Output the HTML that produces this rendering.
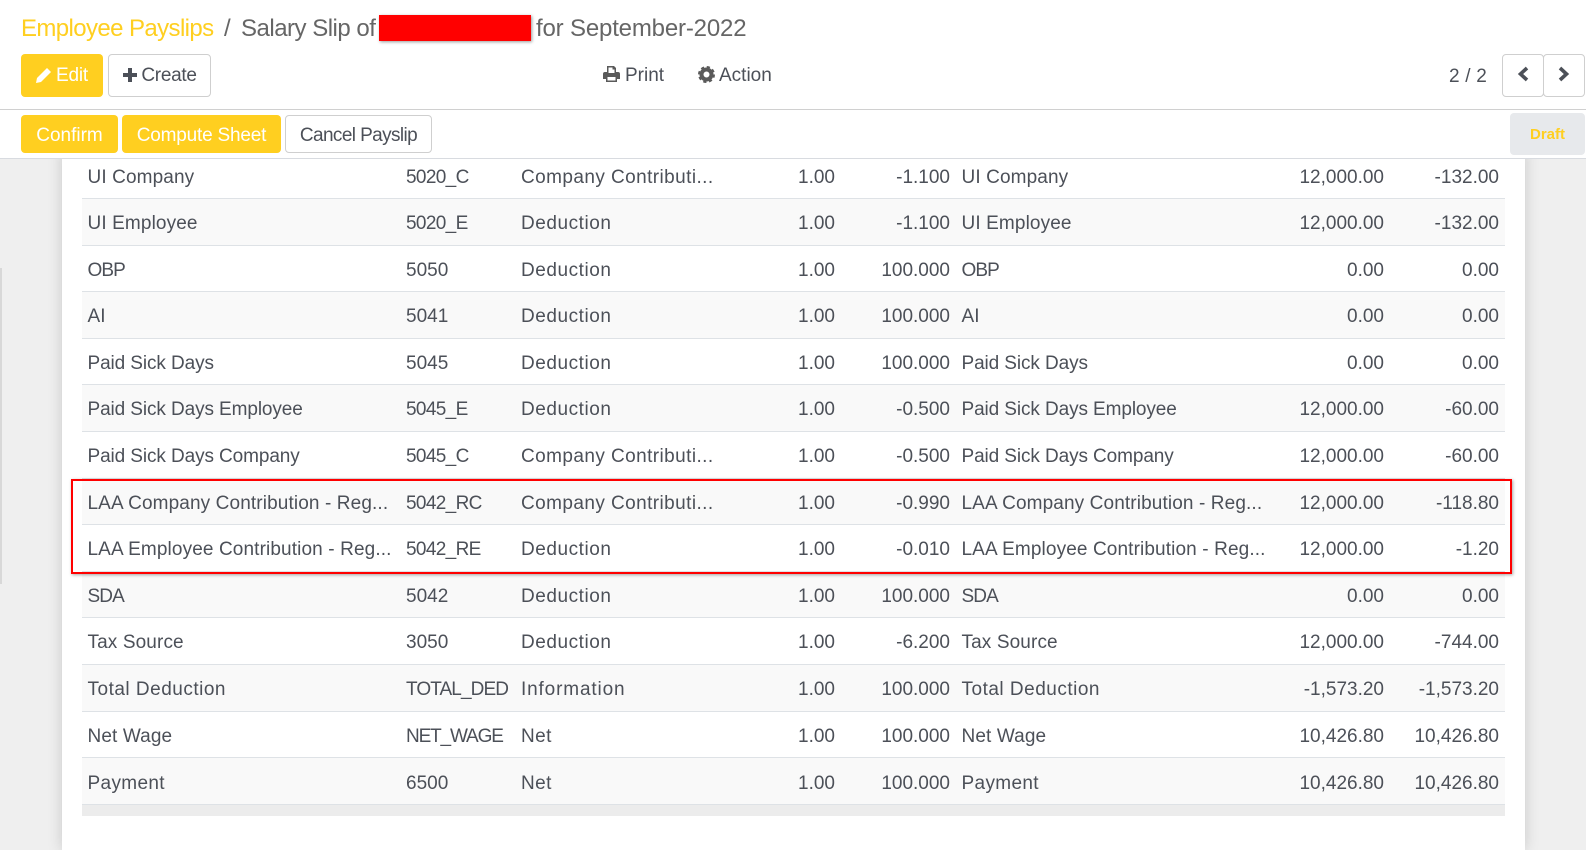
<!DOCTYPE html>
<html><head><meta charset="utf-8">
<style>
html,body{margin:0;padding:0}
body{width:1586px;height:847px;overflow:hidden;position:relative;background:#efefef;font-family:"Liberation Sans",sans-serif;font-size:19px;color:#4c5058}
div,span,svg{position:absolute;box-sizing:border-box}
.t{white-space:nowrap;line-height:24px}
.btn{border-radius:4px;line-height:36px;white-space:nowrap;text-align:center}
.y{background:#ffcf20;color:#fff}
.w{background:#fff;border:1px solid #cfcfcf;color:#4c5058}
.row{left:82px;width:1423px;height:46.6px;border-top:1px solid #dee2e6}
.s{background:#f9f9f9}
.row span{top:12px;line-height:26px;white-space:nowrap}
.row.first span{top:13px}
.row.last span{top:13px}
.a{left:5.500px;letter-spacing:.12px}.b{left:324px}.c{left:439px;letter-spacing:.42px}
.b.u{letter-spacing:-.65px}
.d{right:670px}.e{right:555px}
.f{left:879.500px;letter-spacing:.12px}
.g{right:121px}.h{right:6px}
.a.p,.f.p{letter-spacing:-.1px}
.a.q,.f.q{letter-spacing:-.9px}
.c.x{letter-spacing:.55px}
</style></head><body>
<div style="left:0;top:268px;width:2px;height:316px;background:#d8d8d8"></div>
<div style="left:62px;top:150px;width:1463px;height:700px;background:#fff;box-shadow:0 0 14px rgba(0,0,0,.16)"></div>

<div style="left:82px;top:804px;width:1423px;height:12px;background:#ececec;border-top:1px solid #dee2e6"></div>

<div class="row first" style="top:152px;height:46px;border-top:0"><span class="a">UI Company</span><span class="b u">5020_C</span><span class="c">Company Contributi...</span><span class="d">1.00</span><span class="e">-1.100</span><span class="f">UI Company</span><span class="g">12,000.00</span><span class="h">-132.00</span></div>
<div class="row s" style="top:198px"><span class="a">UI Employee</span><span class="b u">5020_E</span><span class="c x">Deduction</span><span class="d">1.00</span><span class="e">-1.100</span><span class="f">UI Employee</span><span class="g">12,000.00</span><span class="h">-132.00</span></div>
<div class="row" style="top:244.6px"><span class="a q">OBP</span><span class="b">5050</span><span class="c x">Deduction</span><span class="d">1.00</span><span class="e">100.000</span><span class="f q">OBP</span><span class="g">0.00</span><span class="h">0.00</span></div>
<div class="row s" style="top:291.2px"><span class="a">AI</span><span class="b">5041</span><span class="c x">Deduction</span><span class="d">1.00</span><span class="e">100.000</span><span class="f">AI</span><span class="g">0.00</span><span class="h">0.00</span></div>
<div class="row" style="top:337.8px"><span class="a p">Paid Sick Days</span><span class="b">5045</span><span class="c x">Deduction</span><span class="d">1.00</span><span class="e">100.000</span><span class="f p">Paid Sick Days</span><span class="g">0.00</span><span class="h">0.00</span></div>
<div class="row s" style="top:384.4px"><span class="a p">Paid Sick Days Employee</span><span class="b u">5045_E</span><span class="c x">Deduction</span><span class="d">1.00</span><span class="e">-0.500</span><span class="f p">Paid Sick Days Employee</span><span class="g">12,000.00</span><span class="h">-60.00</span></div>
<div class="row" style="top:431px"><span class="a p">Paid Sick Days Company</span><span class="b u">5045_C</span><span class="c">Company Contributi...</span><span class="d">1.00</span><span class="e">-0.500</span><span class="f p">Paid Sick Days Company</span><span class="g">12,000.00</span><span class="h">-60.00</span></div>
<div class="row s" style="top:477.6px"><span class="a">LAA Company Contribution - Reg...</span><span class="b u">5042_RC</span><span class="c">Company Contributi...</span><span class="d">1.00</span><span class="e">-0.990</span><span class="f">LAA Company Contribution - Reg...</span><span class="g">12,000.00</span><span class="h">-118.80</span></div>
<div class="row" style="top:524.2px"><span class="a">LAA Employee Contribution - Reg...</span><span class="b u">5042_RE</span><span class="c x">Deduction</span><span class="d">1.00</span><span class="e">-0.010</span><span class="f">LAA Employee Contribution - Reg...</span><span class="g">12,000.00</span><span class="h">-1.20</span></div>
<div class="row s" style="top:570.8px"><span class="a q">SDA</span><span class="b">5042</span><span class="c x">Deduction</span><span class="d">1.00</span><span class="e">100.000</span><span class="f q">SDA</span><span class="g">0.00</span><span class="h">0.00</span></div>
<div class="row" style="top:617.4px"><span class="a">Tax Source</span><span class="b">3050</span><span class="c x">Deduction</span><span class="d">1.00</span><span class="e">-6.200</span><span class="f">Tax Source</span><span class="g">12,000.00</span><span class="h">-744.00</span></div>
<div class="row s" style="top:664px"><span class="a" style="letter-spacing:.5px">Total Deduction</span><span class="b u" style="letter-spacing:-.9px">TOTAL_DED</span><span class="c" style="letter-spacing:.85px">Information</span><span class="d">1.00</span><span class="e">100.000</span><span class="f" style="letter-spacing:.5px">Total Deduction</span><span class="g">-1,573.20</span><span class="h">-1,573.20</span></div>
<div class="row" style="top:710.6px"><span class="a">Net Wage</span><span class="b u" style="letter-spacing:-1.15px">NET_WAGE</span><span class="c">Net</span><span class="d">1.00</span><span class="e">100.000</span><span class="f">Net Wage</span><span class="g">10,426.80</span><span class="h">10,426.80</span></div>
<div class="row s last" style="top:757.2px"><span class="a" style="letter-spacing:.35px">Payment</span><span class="b">6500</span><span class="c">Net</span><span class="d">1.00</span><span class="e">100.000</span><span class="f" style="letter-spacing:.35px">Payment</span><span class="g">10,426.80</span><span class="h">10,426.80</span></div>

<div style="left:71px;top:479px;width:1441px;height:95px;border:2px solid #f00;box-shadow:1px 1px 3px rgba(0,0,0,.35)"></div>

<div style="left:0;top:0;width:1586px;height:159px;background:#fff;border-bottom:1px solid #d8dbe0"></div>
<div style="left:0;top:109px;width:1586px;height:1px;background:#d0d0d0"></div>

<div class="t" style="left:21px;top:15px;font-size:24px;line-height:27px;color:#ffcf20;letter-spacing:-.6px">Employee Payslips</div>
<div class="t" style="left:224px;top:15px;font-size:24px;line-height:27px;color:#666">/</div>
<div class="t" style="left:241px;top:15px;font-size:24px;line-height:27px;color:#666;letter-spacing:-.5px">Salary Slip of</div>
<div style="left:379px;top:15px;width:152px;height:26px;background:#f00;box-shadow:1px 1px 3px rgba(0,0,0,.4)"></div>
<div class="t" style="left:536px;top:15px;font-size:24px;line-height:27px;color:#666;letter-spacing:-.17px">for September-2022</div>

<div class="btn y" style="left:21px;top:54px;width:82px;height:43px;line-height:43px;padding-left:20px;letter-spacing:-.2px">Edit</div>
<svg style="left:35px;top:67px" width="17" height="17" viewBox="0 0 17 17"><path fill="#fff" d="M12 1l4 4-10 10-5 1 1-5z"/></svg>
<div class="btn w" style="left:108px;top:54px;width:103px;height:43px;line-height:41px;padding-left:19px;letter-spacing:-.3px">Create</div>
<svg style="left:123px;top:68px" width="14" height="14" viewBox="0 0 14 14"><path fill="#4c5058" d="M5 0h4v5h5v4H9v5H5V9H0V5h5z"/></svg>

<svg style="left:603px;top:66px" width="17" height="16" viewBox="0 0 17 16"><path fill="#5a5a5a" d="M4 0h7l2 2v4h2a2 2 0 0 1 2 2v5h-3v3H3v-3H0V8a2 2 0 0 1 2-2h2zM5.500 1.500V7h6V3.500h-2v-2zM4.500 11v3.500h8V11z" fill-rule="evenodd"/></svg>
<div class="t" style="left:625px;top:64px">Print</div>
<svg style="left:698px;top:66px" width="17" height="17" viewBox="0 0 17 17"><circle cx="8.500" cy="8.500" r="5" fill="none" stroke="#5a5a5a" stroke-width="4"/><circle cx="8.500" cy="8.500" r="7" fill="none" stroke="#5a5a5a" stroke-width="3" stroke-dasharray="3 2.500"/></svg>
<div class="t" style="left:719px;top:64px">Action</div>

<div class="t" style="left:1449px;top:65px;letter-spacing:.2px">2 / 2</div>
<div class="w" style="left:1502px;top:54px;width:42px;height:43px;border-radius:4px"></div>
<div class="w" style="left:1543px;top:54px;width:42px;height:43px;border-radius:4px"></div>
<svg style="left:1517px;top:66px" width="12" height="16" viewBox="0 0 12 16"><path fill="none" stroke="#4c5058" stroke-width="3.600" d="M10 2L3.500 8l6.500 6"/></svg>
<svg style="left:1558px;top:66px" width="12" height="16" viewBox="0 0 12 16"><path fill="none" stroke="#4c5058" stroke-width="3.600" d="M2 2l6.500 6L2 14"/></svg>

<div class="btn y" style="left:21px;top:115px;width:97px;height:38px;line-height:41px">Confirm</div>
<div class="btn y" style="left:122px;top:115px;width:159px;height:38px;line-height:41px;letter-spacing:-.2px">Compute Sheet</div>
<div class="btn w" style="left:285px;top:115px;width:147px;height:38px;line-height:39px;letter-spacing:-.6px">Cancel Payslip</div>

<div style="left:1510px;top:113px;width:75px;height:42px;background:#e7e9ec;border-radius:4px;color:#ffcf20;font-weight:bold;font-size:15px;line-height:43px;text-align:center">Draft</div>
</body></html>
